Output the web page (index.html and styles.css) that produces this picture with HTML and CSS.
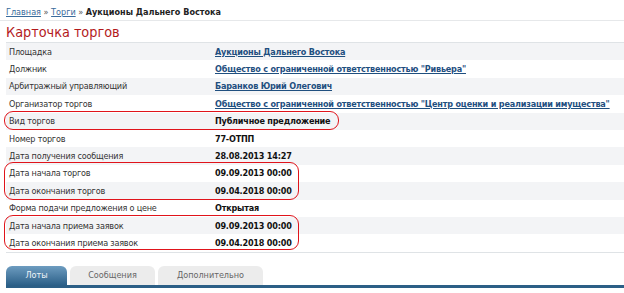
FILE: index.html
```html
<!DOCTYPE html>
<html>
<head>
  <title>Карточка торгов</title>
  <link rel="stylesheet" href="styles.css">
</head>
<body>
  <div class="crumbs">
    <a href="#">Главная</a> <span class="sep">»</span> <a href="#">Торги</a> <span class="sep">»</span> <b>Аукционы Дальнего Востока</b>
  </div>
  <div class="page">
    <h1 class="title">Карточка торгов</h1>
    <div class="card">
      <table class="info">
        <tr><td class="label">Площадка</td><td class="value"><a href="#">Аукционы Дальнего Востока</a></td></tr>
        <tr><td class="label">Должник</td><td class="value"><a href="#">Общество с ограниченной ответственностью "Ривьера"</a></td></tr>
        <tr><td class="label">Арбитражный управляющий</td><td class="value"><a href="#">Баранков Юрий Олегович</a></td></tr>
        <tr><td class="label">Организатор торгов</td><td class="value"><a href="#">Общество с ограниченной ответственностью "Центр оценки и реализации имущества"</a></td></tr>
        <tr><td class="label">Вид торгов</td><td class="value">Публичное предложение</td></tr>
        <tr><td class="label">Номер торгов</td><td class="value">77-ОТПП</td></tr>
        <tr><td class="label">Дата получения сообщения</td><td class="value">28.08.2013 14:27</td></tr>
        <tr><td class="label">Дата начала торгов</td><td class="value">09.09.2013 00:00</td></tr>
        <tr><td class="label">Дата окончания торгов</td><td class="value">09.04.2018 00:00</td></tr>
        <tr><td class="label">Форма подачи предложения о цене</td><td class="value">Открытая</td></tr>
        <tr><td class="label">Дата начала приема заявок</td><td class="value">09.09.2013 00:00</td></tr>
        <tr><td class="label">Дата окончания приема заявок</td><td class="value">09.04.2018 00:00</td></tr>
      </table>
      <!-- red marks drawn over the table -->
      <div class="mark mark-kind"></div>
      <div class="mark mark-dates"></div>
      <div class="mark mark-apply"></div>
    </div>
    <div class="tabs">
      <a href="#" class="tab active">Лоты</a>
      <a href="#" class="tab">Сообщения</a>
      <a href="#" class="tab">Дополнительно</a>
    </div>
  </div>
</body>
</html>
```

FILE: styles.css
```css
body {
  margin: 0;
  background-color: white;
  font-family: "DejaVu Sans Condensed", "DejaVu Sans", sans-serif;
  font-size: 9px;
  color: #333;
  overflow: hidden;
}
.crumbs {
  padding: 7px 6px 0 6px;
  height: 13px;
  border-bottom: 1px solid #e6e8ea;
  color: #222;
}
.crumbs a {
  color: #3a6b9c;
}
.crumbs .sep {
  color: #555;
}
.crumbs b {
  color: #222;
}
.page {
  padding-left: 6px;
}
.title {
  margin: 0;
  padding-top: 3px;
  height: 18px;
  font-size: 14.3px;
  font-weight: normal;
  color: #b3191c;
}
.card {
  position: relative;
}
.info {
  width: 100%;
  table-layout: fixed;
  border-collapse: collapse;
  border-top: 1px solid #dfe3e6;
  border-bottom: 1px solid #dfe3e6;
  letter-spacing: -0.2px;
}
.info td {
  height: 17.4px;
  padding: 0 3px;
  white-space: nowrap;
}
.info tr:nth-child(odd) {
  background-color: #f3f4f6;
}
.label {
  width: 200px;
}
.value {
  font-weight: bold;
  color: #111;
}
.value a {
  color: #1f4f7f;
}
.mark {
  position: absolute;
  border: 1.5px solid #e0141b;
  border-radius: 9px;
}
.mark-kind {
  left: -2px;
  top: 69px;
  width: 333px;
  height: 17px;
}
.mark-dates {
  left: -2px;
  top: 120px;
  width: 293px;
  height: 36px;
}
.mark-apply {
  left: -2px;
  top: 173px;
  width: 293px;
  height: 33px;
}
.tabs {
  display: flex;
  gap: 3px;
  margin-top: 13px;
  border-bottom: 3px solid #2c5f86;
  box-shadow: 0 1px 0 #9fb6c8;
}
.tab {
  display: block;
  height: 19px;
  line-height: 19px;
  text-align: center;
  text-decoration: none;
  color: #666;
  background-color: #ececec;
  border-radius: 6px 6px 0 0;
}
.tab:nth-child(1) {
  width: 61px;
}
.tab:nth-child(2) {
  width: 85px;
}
.tab:nth-child(3) {
  width: 105px;
}
.tab.active {
  color: #eef4f9;
  background: linear-gradient(#6d9cc0, #2d6189);
}
```
